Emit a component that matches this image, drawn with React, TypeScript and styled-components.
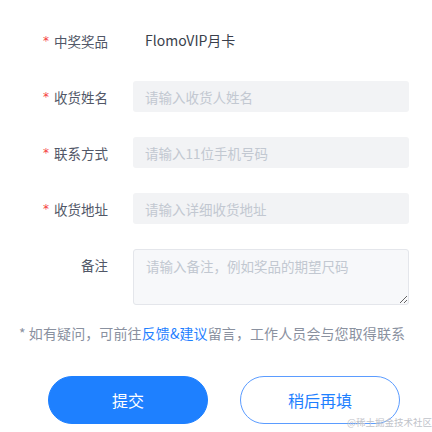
import styled, { createGlobalStyle } from 'styled-components';

const GlobalStyle = createGlobalStyle`
  html, body {
    margin: 0;
    padding: 0;
    background: #ffffff;
  }
  body {
    font-family: "Noto Sans CJK SC", "Liberation Sans", sans-serif;
  }
`

const Page = styled('div')`
  position: relative;
  width: 432px;
  height: 432px;
  overflow: hidden;
  background: #fff;
`

const Form = styled('div')`
  display: flex;
  flex-direction: column;
  gap: 25px;
  padding-top: 25px;
`

const Row = styled('div')`
  display: grid;
  grid-template-columns: 108px 276px;
  column-gap: 25px;
  align-items: start;
`

const Label = styled('div')`
  display: flex;
  justify-content: flex-end;
  align-items: center;
  height: 31px;
  font-size: 13.5px;
  color: #515767;
`

const Star = styled('span')`
  color: #f53f3f;
  font-size: 12px;
  margin-right: 5px;
  font-family: "DejaVu Sans", sans-serif;
`

const Value = styled('div')`
  height: 31px;
  line-height: 31px;
  padding-left: 12px;
  font-size: 14px;
  color: #3a3f4b;
`

const Input = styled('input')`
  box-sizing: border-box;
  width: 276px;
  height: 31px;
  padding: 0 12px;
  border: none;
  border-radius: 3px;
  background: #f2f3f5;
  font-family: inherit;
  font-size: 13.5px;
  color: #252933;
  outline: none;
  &::placeholder {
    color: #c2c8d1;
  }
`

const Area = styled('textarea')`
  box-sizing: border-box;
  display: block;
  width: 276px;
  height: 56px;
  padding: 6px 12px;
  border: 1px solid #e4e6eb;
  border-radius: 3px;
  background: #f7f8fa;
  font-family: inherit;
  font-size: 13.5px;
  line-height: 20px;
  color: #252933;
  outline: none;
  &::placeholder {
    color: #c2c8d1;
  }
`

const Note = styled('p')`
  margin: 18px 0 0;
  padding-left: 19px;
  font-size: 14px;
  line-height: 20px;
  letter-spacing: 0.1px;
  color: #8a919f;
  white-space: nowrap;
`

const Link = styled('a')`
  color: #1e80ff;
  text-decoration: none;
`

const Buttons = styled('div')`
  display: flex;
  gap: 32px;
  padding-left: 48px;
  margin-top: 33px;
`

const Button = styled('button')<{ $ghost?: boolean }>`
  box-sizing: border-box;
  width: 160px;
  height: 48px;
  border-radius: 24px;
  font-family: inherit;
  font-size: 16px;
  cursor: pointer;
  border: ${p => (p.$ghost ? '1.5px solid #5b9cff' : '1px solid #1e80ff')};
  background: ${p => (p.$ghost ? '#ffffff' : '#1e80ff')};
  color: ${p => (p.$ghost ? '#1e80ff' : '#ffffff')};
`

const Watermark = styled('span')`
  position: absolute;
  right: 0;
  bottom: 3px;
  font-family: "Noto Sans CJK SC", serif;
  font-size: 9.5px;
  color: #bfc3ca;
`

const fields = [
  { label: '收货姓名', placeholder: '请输入收货人姓名' },
  { label: '联系方式', placeholder: '请输入11位手机号码' },
  { label: '收货地址', placeholder: '请输入详细收货地址' },
]

export default function App() {
  return (
    <Page>
      <GlobalStyle />
      <Form>
        {/* 奖品 */}
        <Row>
          <Label><Star>*</Star>中奖奖品</Label>
          <Value>FlomoVIP月卡</Value>
        </Row>

        {fields.map(f => (
          <Row key={f.label}>
            <Label><Star>*</Star>{f.label}</Label>
            <Input placeholder={f.placeholder} />
          </Row>
        ))}

        {/* 备注 */}
        <Row>
          <Label>备注</Label>
          <Area placeholder="请输入备注，例如奖品的期望尺码" />
        </Row>
      </Form>

      <Note>
        * 如有疑问，可前往<Link>反馈&amp;建议</Link>留言，工作人员会与您取得联系
      </Note>

      <Buttons>
        <Button>提交</Button>
        <Button $ghost>稍后再填</Button>
      </Buttons>

      <Watermark>@稀土掘金技术社区</Watermark>
    </Page>
  )
}
